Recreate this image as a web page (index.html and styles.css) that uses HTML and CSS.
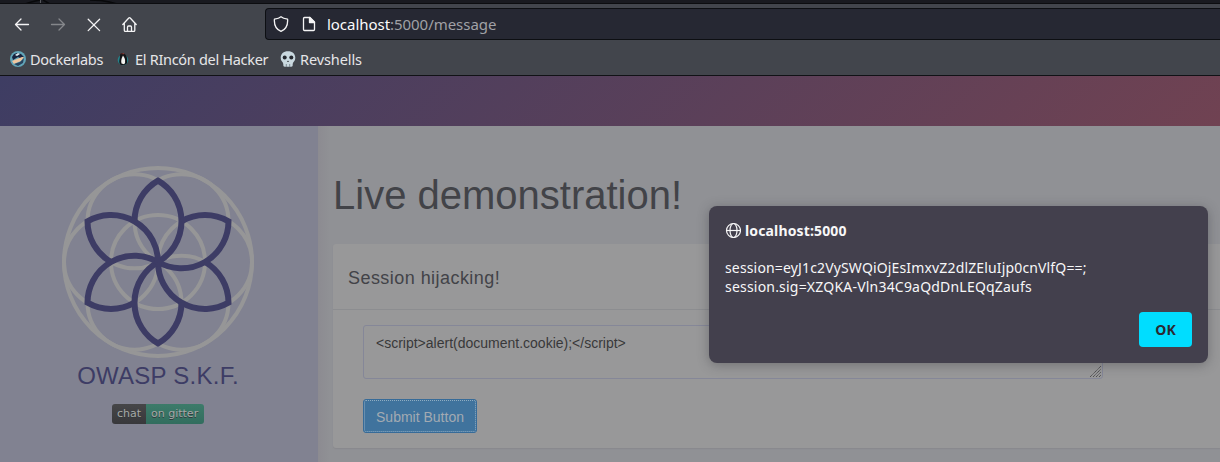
FILE: index.html
```html
<!DOCTYPE html>
<html lang="en">
<head>
<meta charset="utf-8">
<title>Live demonstration</title>
<link rel="stylesheet" href="styles.css">
</head>
<body>
<div class="browser">
  <div class="tabstrip"><svg width="160" height="4" fill="none" stroke="#08090b" stroke-width="1.5"><path d="M25 4Q34 1 40 0M43 0l7 4M90 0q15 0 27 4"/><path d="M40.500 0v4" stroke="#55575c" stroke-width="1"/></svg></div>
  <div class="toolbar">
    <nav class="nav-buttons">
      <svg width="16" height="16" viewBox="0 0 16 16"><path d="M14.500 8.500H1.500M7 3L1.500 8.500 7 14"/></svg>
      <svg class="disabled" width="16" height="16" viewBox="0 0 16 16"><path d="M1.500 8.500h13M9 3L14.500 8.500 9 14"/></svg>
      <svg width="16" height="16" viewBox="0 0 16 16"><path d="M2.200 3.200l11.400 11.400M13.600 3.200L2.200 14.600"/></svg>
      <svg width="16" height="16" viewBox="0 0 16 16"><path d="M.8 8.500L6.800 2Q7.500 1.300 8.200 2L14.200 8.500M2.300 7V14.300Q2.300 15.500 3.500 15.500H11.600Q12.800 15.500 12.800 14.300V7M5.500 15.500V11.300Q5.500 10 6.500 10H8.500Q9.500 10 9.500 11.300V15.500"/></svg>
    </nav>
    <div class="urlbar">
      <svg width="16" height="16" viewBox="0 0 16 16"><path d="M8 .8Q10 2.600 14.600 3.200C15 9 12.500 13.500 8 15.400C3.500 13.500 1 9 1.400 3.200Q6 2.600 8 .8Z"/></svg>
      <svg class="page-icon" width="16" height="16" viewBox="0 0 16 16"><path d="M3.500 1.500H9L13.500 6V13.500Q13.500 14.500 12.500 14.500H3.500Q2.500 14.500 2.500 13.500V2.500Q2.500 1.500 3.500 1.500Z"/><path class="solid" d="M8.500 1.500L13.500 6.500H8.500Z"/></svg>
      <span class="url"><b>localhost</b>:5000/message</span>
    </div>
  </div>
  <div class="bookmarks">
    <span class="bookmark docker"><svg width="16" height="16" viewBox="0 0 16 16"><circle cx="8" cy="8" r="8" fill="#62a5b8"/><path d="M2 6L4 3 7 2 11 3 14 6 12 8 8 6 3 9Z" fill="#17233f"/><path d="M2 10L7 8 12 6 14 6 11 10 6 12 4 13Z" fill="#efc6a0"/><path d="M4 13L10 11 14 7 13 12 8 15Z" fill="#28445f"/><path d="M5 4l3-2 2 1-3 2Z" fill="#e2edf0"/></svg><span>Dockerlabs</span></span>
    <span class="bookmark rincon"><svg width="16" height="16" viewBox="0 0 16 16"><circle cx="8" cy="9" r="5.300" fill="#26848c"/><path d="M7 2C10 2 12 5 12 8S13 13 9 14H6C3 12 5 8 5 5Q5 2 7 2Z" fill="#111316"/><path d="M8 4.500Q5.500 9 6.500 12.500L9 13.300Q12 10 8 4.500Z" fill="#f2f2ef"/><path d="M5 3l4-.7.3 1Z" fill="#b64439"/></svg><span>El RIncón del Hacker</span></span>
    <span class="bookmark skull"><svg width="16" height="16" viewBox="0 0 16 16"><path d="M8 .3C12.500.3 15.300 3 15.300 6.800Q15.300 9.500 14 10.500Q13 11 12.700 13V14.500Q12.500 15.800 11 15.800H5Q3.500 15.800 3.300 14.500V13Q3 11 2 10.500Q.7 9.500.7 6.800C.7 3 3.500.3 8 .3Z" fill="#c9d8df"/><circle cx="4.700" cy="6.500" r="2" fill="#24282e"/><circle cx="11.300" cy="6.500" r="2" fill="#24282e"/><path d="M7 11L8 9.500l1 1.500Z" fill="#24282e"/><path d="M6.300 13v3M9.700 13v3" stroke="#697680" stroke-width=".8"/></svg><span>Revshells</span></span>
  </div>
</div>
<header class="banner"></header>
<div class="page">
  <aside class="sidebar">
    <svg class="logo" width="192" height="192" viewBox="-96 -96 192 192" fill="none">
      <g stroke="#969697" stroke-width="4">
        <circle r="94"/><circle r="47"/>
        <circle cx="47" r="47"/><circle cx="-47" r="47"/>
        <circle cx="23.500" cy="-40.700" r="47"/><circle cx="-23.500" cy="-40.700" r="47"/>
        <circle cx="23.500" cy="40.700" r="47"/><circle cx="-23.500" cy="40.700" r="47"/>
      </g>
      <g stroke="#3d3c65" stroke-width="6">
        <path id="petal" d="M-23.500-40.700A47 47 0 0 1 0-81.400A47 47 0 0 1 0 0"/>
        <use href="#petal" transform="rotate(60)"/><use href="#petal" transform="rotate(120)"/>
        <use href="#petal" transform="rotate(180)"/><use href="#petal" transform="rotate(240)"/>
        <use href="#petal" transform="rotate(300)"/>
      </g>
    </svg>
    <div class="brand">OWASP S.K.F.</div>
    <div class="badge"><span class="badge-label">chat</span><span class="badge-value">on gitter</span></div>
  </aside>
  <main class="content">
    <h1>Live demonstration!</h1>
    <section class="card">
      <h2>Session hijacking!</h2>
      <div class="card-body">
        <div class="field">&lt;script&gt;alert(document.cookie);&lt;/script&gt;<svg class="grip" width="11" height="11" stroke="#454548" stroke-dasharray="1.200 .6"><path d="M0 11L11 0M3 11L11 3M6 11L11 6M9 11L11 9"/></svg></div>
        <button class="submit">Submit Button</button>
      </div>
    </section>
  </main>
</div>
<div class="dialog">
  <div class="dialog-title"><svg width="16" height="16" viewBox="0 0 16 16"><circle cx="8.500" cy="8.500" r="7"/><ellipse cx="8.500" cy="8.500" rx="3.500" ry="7"/><path d="M1.500 8.500H15.500"/></svg><span>localhost:5000</span></div>
  <div class="dialog-message"><span class="line1">session=eyJ1c2VySWQiOjEsImxvZ2dlZEluIjp0cnVlfQ==;</span><br><span class="line2">session.sig=XZQKA-Vln34C9aQdDnLEQqZaufs</span></div>
  <button class="ok">OK</button>
</div>
</body>
</html>
```
FILE: styles.css
```css
* { box-sizing: border-box; }
body { margin: 0; width: 1220px; height: 462px; overflow: hidden; display: flex; flex-direction: column; font-family: "Liberation Sans", Arial, sans-serif; background: #909195; }
svg { display: block; flex: none; }
button { font: inherit; border: 0; padding: 0; }
.browser { height: 76px; flex: none; background: #42454c; border-bottom: 1px solid #111216; font-family: "Noto Sans", sans-serif; color: #e6e6e8; }
.tabstrip { height: 4px; background: #191a20; border-bottom: 1px solid #0c0d10; overflow: hidden; }
.toolbar { height: 40px; display: flex; padding: 4px 0 4px 14px; }
.nav-buttons { width: 251px; display: flex; gap: 20px; align-items: center; }
.nav-buttons svg, .urlbar svg { fill: none; stroke: #f4f4f5; stroke-width: 1.3; stroke-linecap: round; stroke-linejoin: round; }
.nav-buttons .disabled { stroke: #85878b; }
.urlbar { flex: 1; display: flex; align-items: center; background: #262833; border: 1px solid #0d0f13; border-right: 0; border-radius: 4px 0 0 4px; padding-left: 7px; }
.urlbar .page-icon { margin-left: 12px; }
.urlbar .solid { fill: #f4f4f5; }
.url { margin-left: 10px; font-size: 15px; color: #a0a1a6; letter-spacing: -.04px; }
.url b { font-weight: 400; color: #fbfbfc; }
.bookmarks { height: 31px; display: flex; align-items: flex-start; padding: 5px 0 0 10px; font-size: 14.5px; line-height: 20px; }
.bookmark { display: flex; align-items: center; gap: 4px; white-space: nowrap; }
.docker { width: 93px; letter-spacing: -.28px; }
.rincon { margin-left: 12px; width: 153px; letter-spacing: -.3px; }
.skull { margin-left: 12px; letter-spacing: -.1px; }
.banner { height: 50px; flex: none; background: linear-gradient(135deg, #3e3d63 0%, #704252 100%); }
.page { flex: 1; min-height: 0; display: flex; }
.sidebar { width: 318px; flex: none; background: #818291; padding-top: 40px; display: flex; flex-direction: column; }
.logo { margin-left: 62px; }
.brand { width: 316px; text-align: center; font-size: 24px; line-height: 28px; margin-top: 4px; letter-spacing: .25px; color: #3d3c65; }
.badge { margin: 14px 0 0 112px; width: 92px; height: 20px; border-radius: 3px; overflow: hidden; display: flex; font: 11px/20px "DejaVu Sans", sans-serif; color: #a5a8a7; text-shadow: 0 1px #30383a; }
.badge-label { width: 34px; padding-left: 5px; background: linear-gradient(#464648, #38383b); }
.badge-value { flex: 1; padding-left: 5px; background: linear-gradient(#3d7b6a, #326d5e); white-space: nowrap; }
.content { flex: 1; padding: 45px 0 0 15px; background: linear-gradient(90deg, #8c8b91, #909195 12px); }
h1 { margin: 0; font-weight: 400; font-size: 40px; line-height: 48px; color: #424348; white-space: nowrap; }
.card { margin-top: 25px; height: 204px; background: #989899; border-radius: 3px 0 0 3px; box-shadow: 0 1px 1px #89898d; }
h2 { margin: 0; height: 66px; padding-left: 15px; border-bottom: 1px solid #8c8d90; font-weight: 400; font-size: 18px; line-height: 68px; letter-spacing: .45px; color: #424348; }
.card-body { padding: 15px 30px; }
.field { position: relative; width: 740px; height: 54px; border: 1px solid #858798; border-radius: 3px; padding: 7px 12px; font-size: 14px; line-height: 20px; color: #38383a; }
.grip { position: absolute; right: 1px; bottom: 1px; }
.submit { display: block; margin-top: 20px; width: 114px; height: 34px; padding-top: 2px; background: #40739d; outline: 1px dotted #8facc1; outline-offset: -2px; border: 1px solid #376b98; border-radius: 3px; color: #a2aab2; font-size: 14px; }
.dialog { position: absolute; left: 709px; top: 206px; width: 499px; height: 157px; background: #43404d; border-radius: 8px; box-shadow: 0 2px 12px rgba(40,40,45,.35); padding: 15px 16px 16px; display: flex; flex-direction: column; font-family: "Noto Sans", sans-serif; color: #f7f7f8; }
.dialog-title { display: flex; align-items: center; gap: 4px; height: 18px; font-size: 14px; font-weight: 700; letter-spacing: .14px; }
.dialog-title svg { fill: none; stroke: #f7f7f8; stroke-width: 1.2; }
.dialog-message { margin-top: 19px; font-size: 14px; line-height: 19px; white-space: nowrap; }
.line1 { letter-spacing: .15px; }
.line2 { letter-spacing: .2px; }
.ok { margin: 16px 0 0 auto; width: 53px; height: 35px; flex: none; border-radius: 4px; background: #00ddff; color: #2b2a33; font-size: 14px; font-weight: 700; }
```
